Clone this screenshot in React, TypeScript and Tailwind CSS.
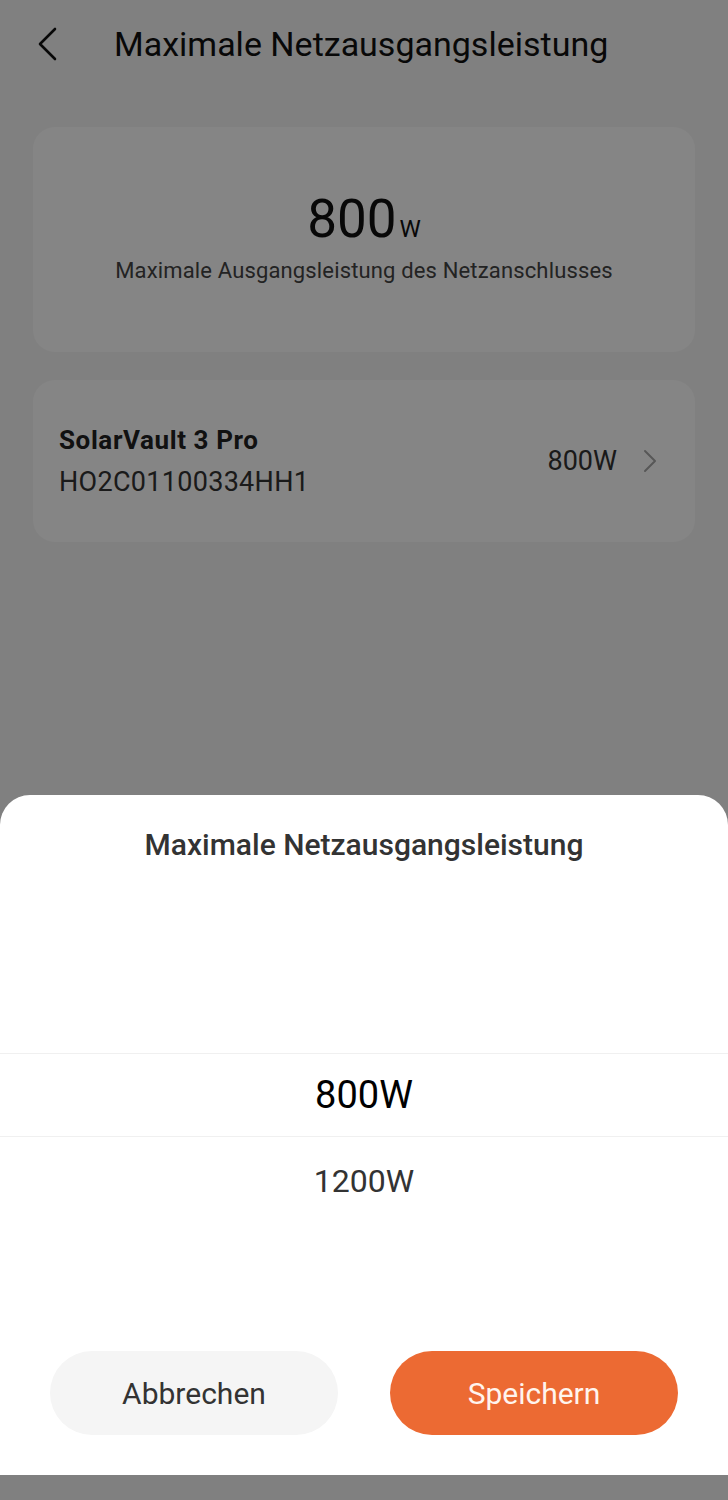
import React from "react";

function ChevronLeft() {
  return (
    <svg width="22" height="34" viewBox="0 0 22 34" fill="none">
      <path d="M19 2 L4 17 L19 32" stroke="#111" strokeWidth="2.6" strokeLinecap="round" strokeLinejoin="round" />
    </svg>
  );
}

function ChevronRight() {
  return (
    <svg width="14" height="24" viewBox="0 0 14 24" fill="none">
      <path d="M2 2 L12 12 L2 22" stroke="#a8a8a8" strokeWidth="2" strokeLinecap="round" strokeLinejoin="round" />
    </svg>
  );
}

export default function App() {
  return (
    <div className="relative h-[1500px] w-[728px] overflow-hidden bg-[#f6f6f6]" style={{ fontFamily: "Roboto, 'Noto Sans', sans-serif" }}>
      {/* page behind the sheet */}
      <div className="flex h-[88px] items-center px-[36px]">
        <ChevronLeft />
        <h1 className="ml-[56px] text-[34px] leading-none text-[#111]">Maximale Netzausgangsleistung</h1>
      </div>

      <div className="mx-[33px] mt-[39px] flex h-[225px] flex-col items-center rounded-[22px] bg-white pt-[66px]">
        <div className="flex items-baseline text-[#111]">
          <span className="text-[53px] leading-none">800</span>
          <span className="ml-[3px] text-[24px] leading-none">W</span>
        </div>
        <p className="mt-[14px] text-[22px] leading-none tracking-[0.15px] text-[#444]">Maximale Ausgangsleistung des Netzanschlusses</p>
      </div>

      <div className="mx-[33px] mt-[28px] flex h-[162px] items-center rounded-[22px] bg-white pl-[26px] pr-[38px]">
        <div className="flex flex-1 flex-col gap-[16px]">
          <span className="text-[26px] font-bold leading-none tracking-[0.6px] text-[#222]">SolarVault 3 Pro</span>
          <span className="text-[27px] leading-none tracking-[0.3px] text-[#333]">HO2C01100334HH1</span>
        </div>
        <span className="text-[27px] leading-none text-[#333]">800W</span>
        <span className="ml-[26px]"><ChevronRight /></span>
      </div>

      {/* dim overlay */}
      <div className="absolute inset-0 bg-black/[0.48]" />

      {/* bottom sheet */}
      <div className="absolute left-0 right-0 top-[795px] flex h-[680px] flex-col rounded-t-[30px] bg-white">
        <h2 className="mt-[35px] text-center text-[30px] font-medium leading-none text-[#333]">Maximale Netzausgangsleistung</h2>

        <div className="mt-[193px] flex flex-col">
          <div className="flex h-[84px] items-center justify-center border-y border-[#f0f0f0] text-[38px] text-black">800W</div>
          <div className="flex h-[88px] items-center justify-center text-[32px] text-[#333]">1200W</div>
        </div>

        <div className="mt-[126px] flex gap-[52px] px-[50px]">
          <button className="h-[84px] flex-1 rounded-full bg-[#f5f5f5] text-[30px] text-[#333]">Abbrechen</button>
          <button className="h-[84px] flex-1 rounded-full bg-[#ec6a33] text-[30px] text-[#fff4ee]">Speichern</button>
        </div>
      </div>
    </div>
  );
}
